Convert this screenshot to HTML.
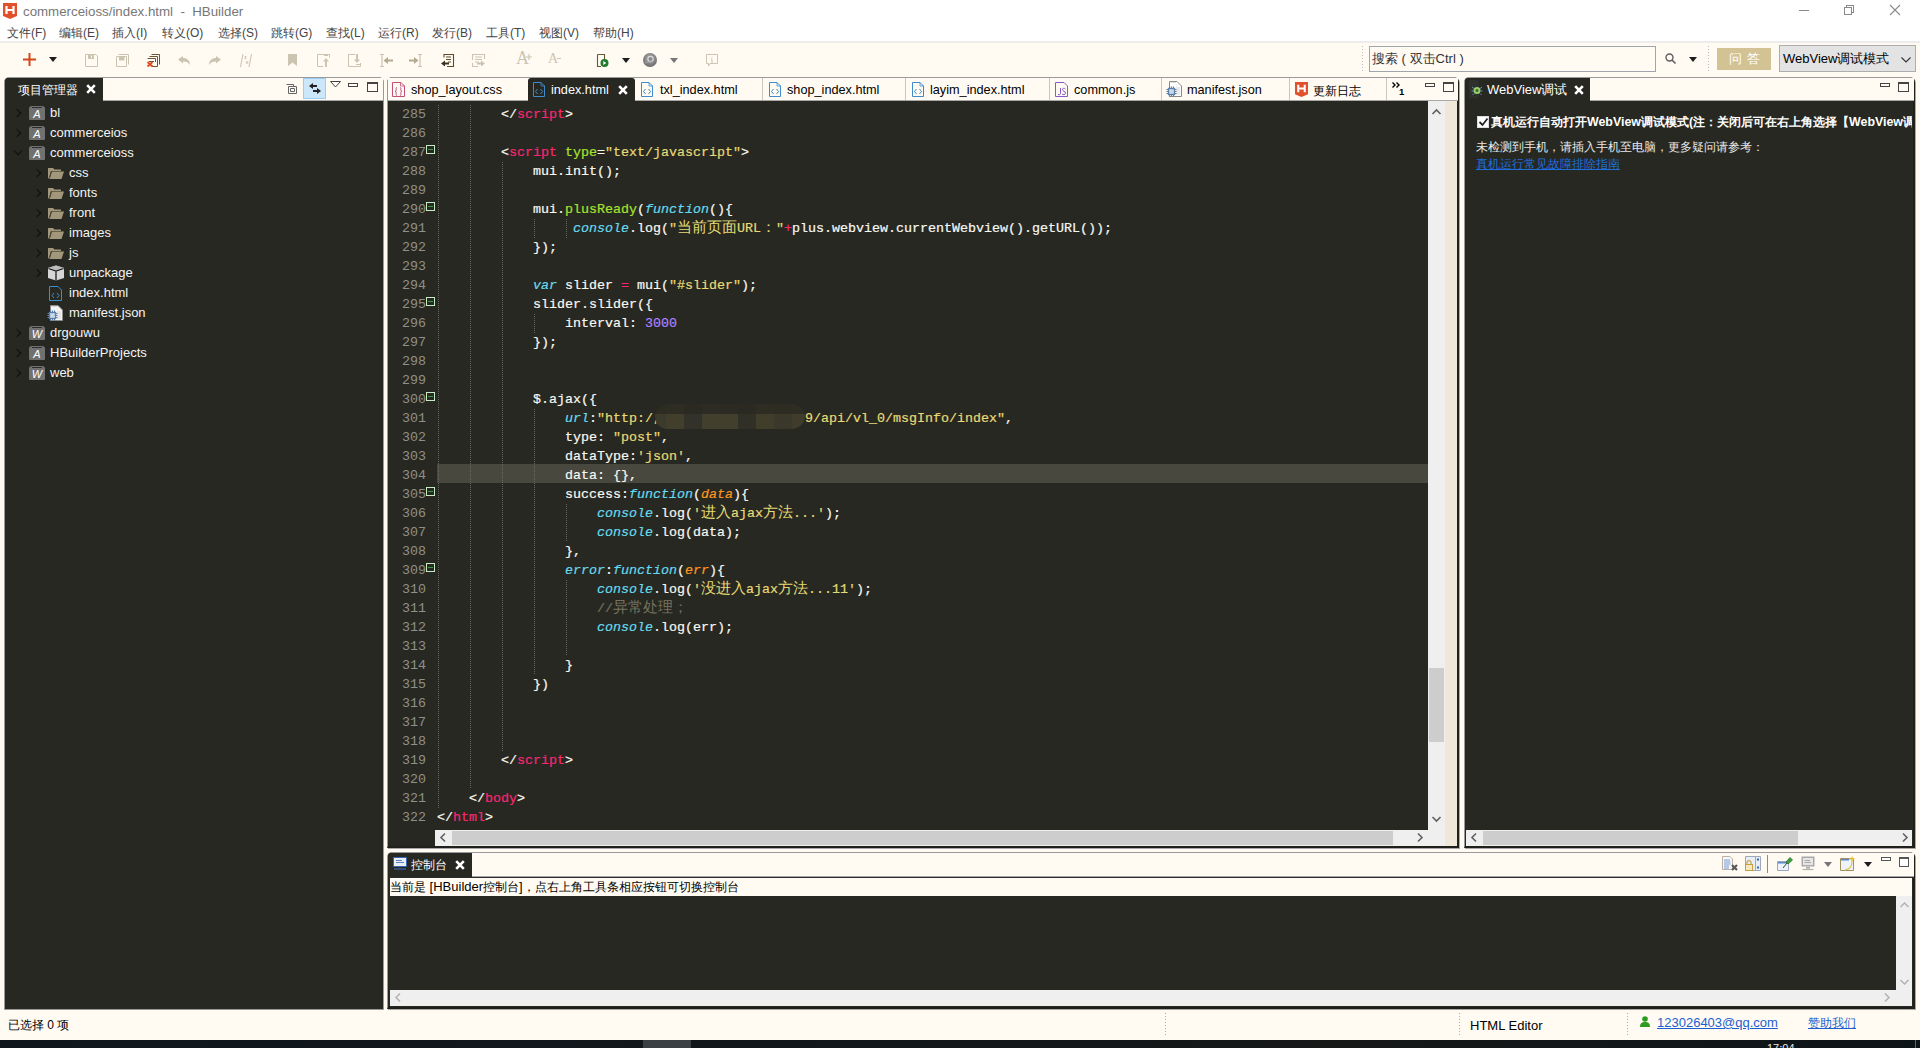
<!DOCTYPE html>
<html><head><meta charset="utf-8">
<style>
*{margin:0;padding:0;box-sizing:border-box}
html,body{width:1920px;height:1048px;overflow:hidden;background:#fffbf3;font-family:"Liberation Sans",sans-serif;font-size:13px;color:#000}
.a{position:absolute}
svg{position:absolute;overflow:visible}
#title{left:0;top:0;width:1920px;height:41px;background:#fff}
#ttext{left:23px;top:4px;font-size:13.3px;color:#777;white-space:pre}
.menu{position:absolute;top:25px;font-size:12px;color:#444;white-space:nowrap}
.panel{position:absolute;background:#272822}
.tabhdr{position:absolute;background:#fffbf3}
.dtab{position:absolute;background:#272822;border-radius:3px 3px 0 0}
.tt{position:absolute;font-size:12.7px;color:#000;white-space:nowrap;top:83px}
.sep{position:absolute;top:78px;width:1px;height:22px;background:#c9c6bf}
.guide{position:absolute;width:1px;background:repeating-linear-gradient(to bottom,#67675f 0 1px,transparent 1px 2px)}
.ln{position:absolute;left:395px;width:31px;text-align:right;height:19px;line-height:19px;font-family:"Liberation Mono",monospace;font-size:13.33px;color:#8f908a}
.fold{position:absolute;left:426px;width:9px;height:9px;border:1px solid #c6eac6;background:#272822}
.fold:after{content:"";position:absolute;left:1px;top:3px;width:5px;height:1px;background:#3c9a3c}
.cl{position:absolute;height:19px;line-height:19px;font-family:"Liberation Mono",monospace;font-size:13.33px;white-space:pre;color:#f8f8f2;-webkit-text-stroke:0.2px currentColor}
.cl .w{color:#f8f8f2}.cl .p{color:#f92672}.cl .g{color:#a6e22e}.cl .y{color:#e6db74}.cl .c{color:#66d9ef;font-style:italic}
.cl .o{color:#fd971f;font-style:italic}.cl .v{color:#ae81ff}.cl .m{color:#75715e}
.cl .cj{font-size:15px;font-style:normal;-webkit-text-stroke:0}
.tr{position:absolute;color:#f4f4f4;font-size:13px;white-space:nowrap}
.chev{position:absolute;width:6px;height:6px;border-right:1.5px solid #101010;border-top:1.5px solid #101010;transform:rotate(45deg)}
.pico{position:absolute;width:16px;height:14px;background:#717171;border-radius:3px 3px 1px 1px;color:#fff;font-size:11px;font-style:italic;text-align:center;line-height:17px}
.pico:before{content:"";position:absolute;left:3px;top:1px;width:10px;height:1px;background:#2e2e2e}
.fold2{position:absolute;width:16px;height:12px}
.sb{position:absolute;background:#efefef}
.thumb{position:absolute;background:#cdcdcd}
</style></head><body>
<!-- ============ title bar ============ -->
<div class="a" id="title"></div>
<svg style="left:3px;top:3px" width="14" height="16" viewBox="0 0 14 16"><path d="M0 0H14V13L7 16L0 13Z" fill="#e2502b"/><path d="M3.5 3V11M10.5 3V11M3.5 7H10.5" stroke="#fff" stroke-width="2.2"/></svg>
<div class="a" id="ttext">commerceioss/index.html  -  HBuilder</div>
<div class="a" style="left:1799px;top:10px;width:10px;height:1px;background:#8a8a8a"></div>
<div class="a" style="left:1846px;top:5px;width:8px;height:8px;border:1px solid #8a8a8a"></div>
<div class="a" style="left:1844px;top:7px;width:8px;height:8px;border:1px solid #8a8a8a;background:#fff"></div>
<svg style="left:1890px;top:5px" width="10" height="10"><path d="M0 0L10 10M10 0L0 10" stroke="#8a8a8a" stroke-width="1.1"/></svg>
<div class="menu" style="left:7px">文件(F)</div>
<div class="menu" style="left:59px">编辑(E)</div>
<div class="menu" style="left:112px">插入(I)</div>
<div class="menu" style="left:162px">转义(O)</div>
<div class="menu" style="left:218px">选择(S)</div>
<div class="menu" style="left:271px">跳转(G)</div>
<div class="menu" style="left:326px">查找(L)</div>
<div class="menu" style="left:378px">运行(R)</div>
<div class="menu" style="left:432px">发行(B)</div>
<div class="menu" style="left:486px">工具(T)</div>
<div class="menu" style="left:539px">视图(V)</div>
<div class="menu" style="left:593px">帮助(H)</div>
<div class="a" style="left:0;top:41px;width:1920px;height:2px;background:#ededed"></div>

<!-- toolbar icons -->
<svg style="left:23px;top:53px" width="13" height="13"><path d="M6.5 0V13M0 6.5H13" stroke="#d5461b" stroke-width="2"/></svg>
<svg style="left:49px;top:57px" width="8" height="5"><path d="M0 0H8L4 5Z" fill="#1d1d1d"/></svg>
<svg style="left:85px;top:54px" width="13" height="13"><path d="M0.5 0.5H11L12.5 2V12.5H0.5Z" fill="none" stroke="#cbc4b1"/><path d="M3 0.5H9V5H3Z" fill="#cbc4b1"/><path d="M6.5 1.5V4" stroke="#fffbf3"/></svg>
<svg style="left:116px;top:54px" width="13" height="13"><path d="M2.5 0.5H12.5V10.5" fill="none" stroke="#cbc4b1"/><path d="M0.5 2.5H10.5V12.5H0.5Z" fill="none" stroke="#cbc4b1"/><path d="M3 2.5H8.5V6.5H3Z" fill="#cbc4b1"/></svg>
<svg style="left:147px;top:54px" width="13" height="13"><path d="M4.5 0.5H12.5V10.5M2.5 2.5H10.5V12.5H5M0.5 4.5H8.5V8" fill="none" stroke="#6b5733"/><path d="M2 7.5H7" stroke="#6b5733"/><path d="M0.5 8L5.5 12.5M5.5 8L0.5 12.5" stroke="#e0491c" stroke-width="1.8"/></svg>
<svg style="left:178px;top:56px" width="12" height="9"><path d="M0 3.5L5 0V2C9 2 12 4.5 12 9C10.5 6.5 8.5 5.5 5 5.5V7.5Z" fill="#cbc4b1"/></svg>
<svg style="left:209px;top:56px" width="12" height="9"><path d="M12 3.5L7 0V2C3 2 0 4.5 0 9C1.5 6.5 3.5 5.5 7 5.5V7.5Z" fill="#cbc4b1"/></svg>
<svg style="left:240px;top:54px" width="12" height="13"><path d="M3 0L0.5 13M11.5 0L9 13" stroke="#cbc4b1" stroke-width="1.1"/><path d="M4.5 2.5L6.5 4.5M6.5 2.5L4.5 4.5M5.5 2V5M6 7.5L8 9.5M8 7.5L6 9.5M7 7V10" stroke="#cbc4b1" stroke-width="0.9"/></svg>
<svg style="left:288px;top:54px" width="9" height="12"><path d="M0 0H9V12L4.5 8.5L0 12Z" fill="#cbc4b1"/></svg>
<svg style="left:317px;top:54px" width="13" height="13"><path d="M12.5 3.5V0.5H0.5V12.5H6" fill="none" stroke="#cbc4b1"/><path d="M7 1.5H11" stroke="#cbc4b1"/><path d="M9 4L6 7.5H8V13H10V7.5H12Z" fill="#cbc4b1"/></svg>
<svg style="left:348px;top:54px" width="13" height="13"><path d="M7 0.5H0.5V12.5H12.5V9" fill="none" stroke="#cbc4b1"/><path d="M8 10.5H12" stroke="#cbc4b1"/><path d="M9 9L6 5.5H8V0H10V5.5H12Z" fill="#cbc4b1"/></svg>
<svg style="left:380px;top:54px" width="13" height="13"><path d="M0 0.5H4M0 12.5H4M2 0.5V12.5" stroke="#cbc4b1" stroke-width="1.2"/><path d="M3.5 6.5L8 3V5.5H13V7.5H8V10Z" fill="#b3aa8f"/></svg>
<svg style="left:409px;top:54px" width="13" height="13"><path d="M9 0.5H13M9 12.5H13M11 0.5V12.5" stroke="#cbc4b1" stroke-width="1.2"/><path d="M9.5 6.5L5 3V5.5H0V7.5H5V10Z" fill="#b3aa8f"/></svg>
<svg style="left:441px;top:54px" width="13" height="13"><path d="M3 3.5V0.5H12.5V12.5H6" fill="none" stroke="#5d4a28" stroke-width="1.1"/><path d="M5 3H10M5 5.5H10M7 8H10" stroke="#5d4a28"/><path d="M0 9.5L4 6.5V8.5H8V10.5H4V12.5Z" fill="#3d3020"/></svg>
<svg style="left:472px;top:54px" width="13" height="13"><path d="M0.5 6V0.5H12.5V5M0.5 9V12.5H6" fill="none" stroke="#cbc4b1" stroke-width="1.1"/><path d="M3 3H10M3 5.5H10M3 8H7" stroke="#cbc4b1"/><path d="M13 9.5L9 6.5V8.5H5V10.5H9V12.5Z" fill="#cbc4b1"/></svg>
<div class="a" style="left:516px;top:49px;font-family:'Liberation Serif',serif;font-size:18px;color:#cbc4b1;line-height:18px">A</div>
<svg style="left:526px;top:54px" width="6" height="6"><path d="M3 0V6M0 3H6" stroke="#cbc4b1" stroke-width="1.1"/></svg>
<div class="a" style="left:548px;top:52px;font-family:'Liberation Serif',serif;font-size:14px;color:#cbc4b1;line-height:14px">A</div>
<svg style="left:557px;top:58px" width="4" height="2"><path d="M0 0.5H4" stroke="#cbc4b1" stroke-width="1"/></svg>
<svg style="left:597px;top:54px" width="12" height="13"><path d="M0.5 0.5H7.5V6M4 12.5H0.5V0.5" fill="none" stroke="#6b5733" stroke-width="1.1"/><circle cx="7.5" cy="9" r="4" fill="#1f7a2c"/><path d="M6.3 7V11L9.3 9Z" fill="#fff"/></svg>
<svg style="left:622px;top:58px" width="8" height="5"><path d="M0 0H8L4 5Z" fill="#1d1d1d"/></svg>
<svg style="left:643px;top:53px" width="14" height="14"><defs><radialGradient id="cg" cx="50%" cy="40%" r="60%"><stop offset="0" stop-color="#b8b8b8"/><stop offset="1" stop-color="#686868"/></radialGradient></defs><circle cx="7" cy="7" r="7" fill="url(#cg)"/><circle cx="7.5" cy="6" r="2.6" fill="#8a8a8a" stroke="#dcdcdc" stroke-width="1.1"/><path d="M2 10C4 9 6 8.5 10 8.5" stroke="#aaa" stroke-width="0.8" fill="none"/></svg>
<svg style="left:670px;top:58px" width="8" height="5"><path d="M0 0H8L4 5Z" fill="#76767a"/></svg>
<svg style="left:706px;top:54px" width="12" height="13"><path d="M0.5 0.5H11.5V9.5H4L2.5 12V9.5H0.5Z" fill="none" stroke="#cbc4b1"/><path d="M6 2.5V3.5M6 5V8M5 8H7M5 5H6" stroke="#cbc4b1" stroke-width="0.9"/></svg>
<!-- search -->
<div class="a" style="left:1362px;top:46px;width:1px;height:26px;background:repeating-linear-gradient(to bottom,#bdbdbd 0 1px,transparent 1px 3px)"></div>
<div class="a" style="left:1369px;top:46px;width:287px;height:26px;border:1px solid #9fa4ad;background:#fffbf3"></div>
<div class="a" style="left:1372px;top:50px;font-size:13px;color:#333;white-space:pre">搜索 ( 双击Ctrl )</div>
<svg style="left:1665px;top:53px" width="11" height="11"><circle cx="4.5" cy="4.5" r="3.5" fill="none" stroke="#5e5e5e" stroke-width="1.4"/><path d="M7 7L10.5 10.5" stroke="#5e5e5e" stroke-width="1.6"/></svg>
<svg style="left:1689px;top:57px" width="8" height="5"><path d="M0 0H8L4 5Z" fill="#1d1d1d"/></svg>
<div class="a" style="left:1708px;top:46px;width:1px;height:26px;background:repeating-linear-gradient(to bottom,#bdbdbd 0 1px,transparent 1px 3px)"></div>
<div class="a" style="left:1717px;top:48px;width:54px;height:22px;background:#d3c294;color:#fff;font-size:13px;line-height:22px;text-align:center;letter-spacing:5px;padding-left:5px">问答</div>
<div class="a" style="left:1779px;top:45px;width:137px;height:27px;border:1px solid #adadad;background:#e3e3e3"></div>
<div class="a" style="left:1783px;top:50px;font-size:13px;color:#000;white-space:nowrap">WebView调试模式</div>
<svg style="left:1901px;top:57px" width="10" height="6"><path d="M0.5 0.5L5 5L9.5 0.5" fill="none" stroke="#333" stroke-width="1.1"/></svg>


<!-- ============ left panel ============ -->
<div class="a" style="left:4px;top:77px;width:380px;height:933px;border:1px solid #9a9a9a;border-radius:5px 5px 0 0;background:#272822"></div>
<div class="tabhdr" style="left:103px;top:78px;width:280px;height:22px"></div>
<div class="a" style="left:103px;top:100px;width:280px;height:1px;background:#a8a8a8"></div>
<div class="dtab" style="left:5px;top:78px;width:98px;height:23px"></div>
<div class="a" style="left:18px;top:82px;color:#fff;font-size:12px">项目管理器</div>
<svg style="left:86px;top:84px" width="10" height="10"><path d="M1.2 1.2L8.8 8.8M8.8 1.2L1.2 8.8" stroke="#fff" stroke-width="2.6"/></svg>
<svg style="left:286px;top:84px" width="11" height="10"><path d="M0.5 0.5H7.5V2.5M2.5 2.5H10.5V9.5H2.5Z" fill="none" stroke="#666" stroke-width="1"/><path d="M4.5 4.5H8.5V7.5H4.5Z" fill="none" stroke="#666"/></svg>
<div class="a" style="left:303px;top:78px;width:23px;height:21px;background:#cce6fa;border:1px solid #99cdf5"></div>
<svg style="left:309px;top:83px" width="12" height="11"><path d="M0 3L4 0V2H8V4H4V6Z" fill="#222"/><path d="M12 8L8 5V7H4V9H8V11Z" fill="#222"/></svg>
<svg style="left:330px;top:81px" width="11" height="7"><path d="M0.5 0.5H10.5L5.5 6Z" fill="none" stroke="#444" stroke-width="1"/></svg>
<div class="a" style="left:348px;top:83px;width:10px;height:4px;border:1px solid #444"></div>
<div class="a" style="left:367px;top:82px;width:11px;height:10px;border:1px solid #444;border-top:2px solid #444"></div>

<div class="chev" style="left:14px;top:110px"></div>
<div class="pico" style="left:29px;top:106px">A</div>
<div class="tr" style="left:50px;top:105px">bl</div>
<div class="chev" style="left:14px;top:130px"></div>
<div class="pico" style="left:29px;top:126px">A</div>
<div class="tr" style="left:50px;top:125px">commerceios</div>
<div class="chev" style="left:15px;top:148px;transform:rotate(135deg)"></div>
<div class="pico" style="left:29px;top:146px">A</div>
<div class="tr" style="left:50px;top:145px">commerceioss</div>
<div class="chev" style="left:34px;top:170px"></div>
<svg style="left:48px;top:167px" width="16" height="12"><path d="M0 1H5L6.5 2.5H13V4H3L1 11H0Z" fill="#a3977b"/><path d="M3.5 4.5H16L13.5 12H0.5Z" fill="#a3977b"/><path d="M1.5 11.5L3.5 4.5" stroke="#272822" stroke-width="0.8"/></svg>
<div class="tr" style="left:69px;top:165px">css</div>
<div class="chev" style="left:34px;top:190px"></div>
<svg style="left:48px;top:187px" width="16" height="12"><path d="M0 1H5L6.5 2.5H13V4H3L1 11H0Z" fill="#a3977b"/><path d="M3.5 4.5H16L13.5 12H0.5Z" fill="#a3977b"/><path d="M1.5 11.5L3.5 4.5" stroke="#272822" stroke-width="0.8"/></svg>
<div class="tr" style="left:69px;top:185px">fonts</div>
<div class="chev" style="left:34px;top:210px"></div>
<svg style="left:48px;top:207px" width="16" height="12"><path d="M0 1H5L6.5 2.5H13V4H3L1 11H0Z" fill="#a3977b"/><path d="M3.5 4.5H16L13.5 12H0.5Z" fill="#a3977b"/><path d="M1.5 11.5L3.5 4.5" stroke="#272822" stroke-width="0.8"/></svg>
<div class="tr" style="left:69px;top:205px">front</div>
<div class="chev" style="left:34px;top:230px"></div>
<svg style="left:48px;top:227px" width="16" height="12"><path d="M0 1H5L6.5 2.5H13V4H3L1 11H0Z" fill="#a3977b"/><path d="M3.5 4.5H16L13.5 12H0.5Z" fill="#a3977b"/><path d="M1.5 11.5L3.5 4.5" stroke="#272822" stroke-width="0.8"/></svg>
<div class="tr" style="left:69px;top:225px">images</div>
<div class="chev" style="left:34px;top:250px"></div>
<svg style="left:48px;top:247px" width="16" height="12"><path d="M0 1H5L6.5 2.5H13V4H3L1 11H0Z" fill="#a3977b"/><path d="M3.5 4.5H16L13.5 12H0.5Z" fill="#a3977b"/><path d="M1.5 11.5L3.5 4.5" stroke="#272822" stroke-width="0.8"/></svg>
<div class="tr" style="left:69px;top:245px">js</div>
<div class="chev" style="left:34px;top:270px"></div>
<svg style="left:48px;top:265px" width="16" height="16"><path d="M8 0.5L16 3V13L8 15.5L0 13V3Z" fill="#d6d6d6"/><path d="M8 0.5L16 3L8 5.5L0 3Z" fill="#bcbcbc"/><path d="M0.5 3.5L8 6L15.5 3.5M8 6V15.5" stroke="#1c1c1c" stroke-width="1.3" fill="none"/></svg><div class="tr" style="left:69px;top:265px">unpackage</div>
<svg style="left:49px;top:286px" width="13" height="15"><path d="M0.5 0.5H9L12.5 4V14.5H0.5Z" fill="#272822" stroke="#3a8fd0" stroke-width="1"/><path d="M5 7L3 9.5L5 12M8 7L10 9.5L8 12" fill="none" stroke="#3a8fd0" stroke-width="1"/></svg>
<div class="tr" style="left:69px;top:285px">index.html</div>
<svg style="left:47px;top:305px" width="16" height="16"><path d="M3.5 0.5H11L15.5 5V15.5H3.5Z" fill="#f4f4f4" stroke="#8a8a8a" stroke-width="1"/><path d="M5 1.5L6 0.5L7 1.5L8 0.5L9 1.5L10 0.5" stroke="#9a9a9a" stroke-width="0.8" fill="none"/><path d="M10 7H14M10 9H14M10 11H14M9 13H14" stroke="#d0d0d0" stroke-width="0.9"/><rect x="2.5" y="7.5" width="6" height="6" fill="#c8d8e8" stroke="#5a7fa8" stroke-width="1.3"/><path d="M3.5 5.5V7M5.5 5.5V7M7.5 5.5V7M3.5 14V15.5M5.5 14V15.5M7.5 14V15.5M0.5 8.5H2M0.5 10.5H2M0.5 12.5H2M9 8.5H10.5M9 10.5H10.5M9 12.5H10.5" stroke="#5a7fa8" stroke-width="1.1"/></svg>
<div class="tr" style="left:69px;top:305px">manifest.json</div>

<div class="chev" style="left:14px;top:330px"></div>
<div class="pico" style="left:29px;top:326px">W</div>
<div class="tr" style="left:50px;top:325px">drgouwu</div>
<div class="chev" style="left:14px;top:350px"></div>
<div class="pico" style="left:29px;top:346px">A</div>
<div class="tr" style="left:50px;top:345px">HBuilderProjects</div>
<div class="chev" style="left:14px;top:370px"></div>
<div class="pico" style="left:29px;top:366px">W</div>
<div class="tr" style="left:50px;top:365px">web</div>


<!-- ============ editor panel ============ -->
<div class="a" style="left:387px;top:77px;width:1072px;height:771px;border:1px solid #9a9a9a;border-right:2px solid #1f1f1c;border-bottom:2px solid #1f1f1c;border-radius:5px 5px 0 0;background:#272822;box-shadow:1px 1px 0 #a8a8a8"></div>
<div class="tabhdr" style="left:388px;top:78px;width:1070px;height:22px"></div>
<div class="a" style="left:388px;top:100px;width:1070px;height:1px;background:#a8a8a8"></div>
<svg style="left:392px;top:82px" width="13" height="15"><path d="M0.5 0.5H9L12.5 4V14.5H0.5Z" fill="#fffbf3" stroke="#c0507a" stroke-width="1"/><path d="M8.5 0.5V4H12.5" fill="none" stroke="#c0507a" stroke-width="0.8"/><path d="M5 5.5C3.8 5.5 4.2 7 4.2 8.2C4.2 9 3.8 9.5 3 9.5C3.8 9.5 4.2 10 4.2 10.8C4.2 12 3.8 13.5 5 13.5M8 5.5C9.2 5.5 8.8 7 8.8 8.2C8.8 9 9.2 9.5 10 9.5C9.2 9.5 8.8 10 8.8 10.8C8.8 12 9.2 13.5 8 13.5" fill="none" stroke="#c0507a" stroke-width="1"/></svg><div class="tt" style="left:411px">shop_layout.css</div>
<div class="dtab" style="left:528px;top:78px;width:107px;height:23px"></div>
<svg style="left:533px;top:82px" width="12" height="15"><path d="M0.5 0.5H8L11.5 4V14.5H0.5Z" fill="#272822" stroke="#3f8ccc" stroke-width="1"/><path d="M8 0.5V4H11.5" fill="none" stroke="#3f8ccc" stroke-width="0.8"/><path d="M4.5 7L2.5 9.5L4.5 12M7.5 7L9.5 9.5L7.5 12" fill="none" stroke="#3f8ccc" stroke-width="1"/></svg>
<div class="tt" style="left:551px;color:#fff">index.html</div>
<svg style="left:618px;top:85px" width="10" height="10"><path d="M1.2 1.2L8.8 8.8M8.8 1.2L1.2 8.8" stroke="#fff" stroke-width="2.6"/></svg>
<svg style="left:641px;top:82px" width="12" height="15"><path d="M0.5 0.5H8L11.5 4V14.5H0.5Z" fill="#fffbf3" stroke="#3f8ccc" stroke-width="1"/><path d="M8 0.5V4H11.5" fill="none" stroke="#3f8ccc" stroke-width="0.8"/><path d="M4.5 7L2.5 9.5L4.5 12M7.5 7L9.5 9.5L7.5 12" fill="none" stroke="#3f8ccc" stroke-width="1"/></svg>
<div class="tt" style="left:660px">txl_index.html</div>
<div class="sep" style="left:762px"></div>
<svg style="left:769px;top:82px" width="12" height="15"><path d="M0.5 0.5H8L11.5 4V14.5H0.5Z" fill="#fffbf3" stroke="#3f8ccc" stroke-width="1"/><path d="M8 0.5V4H11.5" fill="none" stroke="#3f8ccc" stroke-width="0.8"/><path d="M4.5 7L2.5 9.5L4.5 12M7.5 7L9.5 9.5L7.5 12" fill="none" stroke="#3f8ccc" stroke-width="1"/></svg>
<div class="tt" style="left:787px">shop_index.html</div>
<div class="sep" style="left:905px"></div>
<svg style="left:912px;top:82px" width="12" height="15"><path d="M0.5 0.5H8L11.5 4V14.5H0.5Z" fill="#fffbf3" stroke="#3f8ccc" stroke-width="1"/><path d="M8 0.5V4H11.5" fill="none" stroke="#3f8ccc" stroke-width="0.8"/><path d="M4.5 7L2.5 9.5L4.5 12M7.5 7L9.5 9.5L7.5 12" fill="none" stroke="#3f8ccc" stroke-width="1"/></svg>
<div class="tt" style="left:930px">layim_index.html</div>
<div class="sep" style="left:1049px"></div>
<svg style="left:1055px;top:82px" width="13" height="15"><path d="M0.5 0.5H9L12.5 4V14.5H0.5Z" fill="#fffbf3" stroke="#8a5ac8" stroke-width="1"/><path d="M5.5 6V11.5C5.5 12.5 4.5 13 3 12.5M10.5 7C9.5 6 7.5 6 7.5 7.5C7.5 9.5 10.5 9 10.5 11C10.5 13 8 13 7 12" fill="none" stroke="#8a5ac8" stroke-width="1"/></svg>
<div class="tt" style="left:1074px">common.js</div>
<div class="sep" style="left:1161px"></div>
<svg style="left:1166px;top:81px" width="16" height="16"><path d="M3.5 0.5H11L15.5 5V15.5H3.5Z" fill="#fff" stroke="#8a8a8a" stroke-width="1"/><path d="M5 1.5L6 0.5L7 1.5L8 0.5L9 1.5L10 0.5" stroke="#9a9a9a" stroke-width="0.8" fill="none"/><path d="M10 7H14M10 9H14M10 11H14M9 13H14" stroke="#d0d0d0" stroke-width="0.9"/><rect x="2.5" y="7.5" width="6" height="6" fill="#c8d8e8" stroke="#5a7fa8" stroke-width="1.3"/><path d="M3.5 5.5V7M5.5 5.5V7M7.5 5.5V7M3.5 14V15.5M5.5 14V15.5M7.5 14V15.5M0.5 8.5H2M0.5 10.5H2M0.5 12.5H2M9 8.5H10.5M9 10.5H10.5M9 12.5H10.5" stroke="#5a7fa8" stroke-width="1.1"/></svg>
<div class="tt" style="left:1187px">manifest.json</div>
<div class="sep" style="left:1289px"></div>
<svg style="left:1295px;top:82px" width="13" height="15" viewBox="0 0 14 16"><path d="M0 0H14V13L7 16L0 13Z" fill="#e2502b"/><path d="M3.5 3V11M10.5 3V11M3.5 7H10.5" stroke="#fff" stroke-width="2.2"/></svg>
<div class="tt" style="left:1313px;font-size:12px">更新日志</div>
<div class="sep" style="left:1386px"></div>
<svg style="left:1392px;top:82px" width="9" height="6"><path d="M0.5 0.5L3 3L0.5 5.5M4.5 0.5L7 3L4.5 5.5" fill="none" stroke="#000" stroke-width="1.4"/></svg>
<div class="a" style="left:1399px;top:86px;font-size:9.5px;color:#000;font-weight:bold">1</div>
<div class="a" style="left:1425px;top:83px;width:10px;height:4px;border:1px solid #444"></div>
<div class="a" style="left:1443px;top:82px;width:11px;height:10px;border:1px solid #444;border-top:2px solid #444"></div>

<div class="a" style="left:437px;top:464px;width:991px;height:19px;background:#49483e"></div>
<div class="guide" style="left:438px;top:105px;height:703px"></div>
<div class="guide" style="left:470px;top:105px;height:684px"></div>
<div class="guide" style="left:502px;top:162px;height:589px"></div>
<div class="guide" style="left:534px;top:219px;height:19px"></div>
<div class="guide" style="left:566px;top:219px;height:19px"></div>
<div class="guide" style="left:534px;top:314px;height:19px"></div>
<div class="guide" style="left:534px;top:409px;height:266px"></div>
<div class="guide" style="left:566px;top:504px;height:38px"></div>
<div class="guide" style="left:566px;top:580px;height:76px"></div>
<div class="ln" style="top:105px">285</div>
<div class="cl" style="top:105px;left:501px"><span class="w">&lt;/</span><span class="p">script</span><span class="w">&gt;</span></div>
<div class="ln" style="top:124px">286</div>
<div class="ln" style="top:143px">287</div>
<div class="fold" style="top:145px"></div>
<div class="cl" style="top:143px;left:501px"><span class="w">&lt;</span><span class="p">script</span><span class="w"> </span><span class="g">type</span><span class="w">=</span><span class="y">"text/javascript"</span><span class="w">&gt;</span></div>
<div class="ln" style="top:162px">288</div>
<div class="cl" style="top:162px;left:533px"><span class="w">mui.init();</span></div>
<div class="ln" style="top:181px">289</div>
<div class="ln" style="top:200px">290</div>
<div class="fold" style="top:202px"></div>
<div class="cl" style="top:200px;left:533px"><span class="w">mui.</span><span class="g">plusReady</span><span class="w">(</span><span class="c">function</span><span class="w">(){</span></div>
<div class="ln" style="top:219px">291</div>
<div class="cl" style="top:219px;left:573px"><span class="c">console</span><span class="w">.log(</span><span class="y">"</span><span class="y cj">当前页面</span><span class="y">URL</span><span class="y cj">：</span><span class="y">"</span><span class="p">+</span><span class="w">plus.webview.currentWebview().getURL());</span></div>
<div class="ln" style="top:238px">292</div>
<div class="cl" style="top:238px;left:533px"><span class="w">});</span></div>
<div class="ln" style="top:257px">293</div>
<div class="ln" style="top:276px">294</div>
<div class="cl" style="top:276px;left:533px"><span class="c">var</span><span class="w"> slider </span><span class="p">=</span><span class="w"> mui(</span><span class="y">"#slider"</span><span class="w">);</span></div>
<div class="ln" style="top:295px">295</div>
<div class="fold" style="top:297px"></div>
<div class="cl" style="top:295px;left:533px"><span class="w">slider.slider({</span></div>
<div class="ln" style="top:314px">296</div>
<div class="cl" style="top:314px;left:565px"><span class="w">interval: </span><span class="v">3000</span></div>
<div class="ln" style="top:333px">297</div>
<div class="cl" style="top:333px;left:533px"><span class="w">});</span></div>
<div class="ln" style="top:352px">298</div>
<div class="ln" style="top:371px">299</div>
<div class="ln" style="top:390px">300</div>
<div class="fold" style="top:392px"></div>
<div class="cl" style="top:390px;left:533px"><span class="w">$.ajax({</span></div>
<div class="ln" style="top:409px">301</div>
<div class="cl" style="top:409px;left:565px"><span class="c">url</span><span class="w">:</span><span class="y">"http:/,</span><span class="y">                  </span><span class="y">9/api/vl_0/msgInfo/index"</span><span class="w">,</span></div>
<div class="ln" style="top:428px">302</div>
<div class="cl" style="top:428px;left:565px"><span class="w">type: </span><span class="y">"post"</span><span class="w">,</span></div>
<div class="ln" style="top:447px">303</div>
<div class="cl" style="top:447px;left:565px"><span class="w">dataType:</span><span class="y">'json'</span><span class="w">,</span></div>
<div class="ln" style="top:466px">304</div>
<div class="cl" style="top:466px;left:565px"><span class="w">data</span><span class="w">: {},</span></div>
<div class="ln" style="top:485px">305</div>
<div class="fold" style="top:487px"></div>
<div class="cl" style="top:485px;left:565px"><span class="w">success:</span><span class="c">function</span><span class="w">(</span><span class="o">data</span><span class="w">){</span></div>
<div class="ln" style="top:504px">306</div>
<div class="cl" style="top:504px;left:597px"><span class="c">console</span><span class="w">.log(</span><span class="y">'</span><span class="y cj">进入</span><span class="y">ajax</span><span class="y cj">方法</span><span class="y">...'</span><span class="w">);</span></div>
<div class="ln" style="top:523px">307</div>
<div class="cl" style="top:523px;left:597px"><span class="c">console</span><span class="w">.log(data);</span></div>
<div class="ln" style="top:542px">308</div>
<div class="cl" style="top:542px;left:565px"><span class="w">},</span></div>
<div class="ln" style="top:561px">309</div>
<div class="fold" style="top:563px"></div>
<div class="cl" style="top:561px;left:565px"><span class="c">error</span><span class="w">:</span><span class="c">function</span><span class="w">(</span><span class="o">err</span><span class="w">){</span></div>
<div class="ln" style="top:580px">310</div>
<div class="cl" style="top:580px;left:597px"><span class="c">console</span><span class="w">.log(</span><span class="y">'</span><span class="y cj">没进入</span><span class="y">ajax</span><span class="y cj">方法</span><span class="y">...11'</span><span class="w">);</span></div>
<div class="ln" style="top:599px">311</div>
<div class="cl" style="top:599px;left:597px"><span class="m">//</span><span class="m cj">异常处理；</span></div>
<div class="ln" style="top:618px">312</div>
<div class="cl" style="top:618px;left:597px"><span class="c">console</span><span class="w">.log(err);</span></div>
<div class="ln" style="top:637px">313</div>
<div class="ln" style="top:656px">314</div>
<div class="cl" style="top:656px;left:565px"><span class="w">}</span></div>
<div class="ln" style="top:675px">315</div>
<div class="cl" style="top:675px;left:533px"><span class="w">})</span></div>
<div class="ln" style="top:694px">316</div>
<div class="ln" style="top:713px">317</div>
<div class="ln" style="top:732px">318</div>
<div class="ln" style="top:751px">319</div>
<div class="cl" style="top:751px;left:501px"><span class="w">&lt;/</span><span class="p">script</span><span class="w">&gt;</span></div>
<div class="ln" style="top:770px">320</div>
<div class="ln" style="top:789px">321</div>
<div class="cl" style="top:789px;left:469px"><span class="w">&lt;/</span><span class="p">body</span><span class="w">&gt;</span></div>
<div class="ln" style="top:808px">322</div>
<div class="cl" style="top:808px;left:437px"><span class="w">&lt;/</span><span class="p">html</span><span class="w">&gt;</span></div>
<div class="a" style="left:655px;top:404px;width:150px;height:25px;border-radius:16px 14px 14px 12px/12px 12px 13px 13px;overflow:hidden;background:#2c2b23"><div class="a" style="left:0px;top:0;width:11px;height:10px;background:#2d2c23"></div><div class="a" style="left:0px;top:10px;width:11px;height:15px;background:#3b3a2b"></div><div class="a" style="left:11px;top:0;width:18px;height:10px;background:#2e2d24"></div><div class="a" style="left:11px;top:10px;width:18px;height:15px;background:#423e2c"></div><div class="a" style="left:29px;top:0;width:18px;height:10px;background:#2a2a22"></div><div class="a" style="left:29px;top:10px;width:18px;height:15px;background:#33322a"></div><div class="a" style="left:47px;top:0;width:18px;height:10px;background:#2d2c24"></div><div class="a" style="left:47px;top:10px;width:18px;height:15px;background:#433f2d"></div><div class="a" style="left:65px;top:0;width:18px;height:10px;background:#2c2b23"></div><div class="a" style="left:65px;top:10px;width:18px;height:15px;background:#423f2c"></div><div class="a" style="left:83px;top:0;width:18px;height:10px;background:#2a2a22"></div><div class="a" style="left:83px;top:10px;width:18px;height:15px;background:#313027"></div><div class="a" style="left:101px;top:0;width:18px;height:10px;background:#2e2d24"></div><div class="a" style="left:101px;top:10px;width:18px;height:15px;background:#403d2b"></div><div class="a" style="left:119px;top:0;width:18px;height:10px;background:#2d2c23"></div><div class="a" style="left:119px;top:10px;width:18px;height:15px;background:#3a382a"></div><div class="a" style="left:137px;top:0;width:13px;height:10px;background:#2e2d24"></div><div class="a" style="left:137px;top:10px;width:13px;height:15px;background:#3f3c2b"></div></div>

<div class="sb" style="left:1428px;top:101px;width:17px;height:745px"></div>
<div class="a" style="left:1445px;top:101px;width:12px;height:745px;background:#efe7d7"></div>
<div class="thumb" style="left:1429px;top:668px;width:15px;height:74px"></div>
<svg style="left:1432px;top:109px" width="9" height="6"><path d="M0.5 5L4.5 1L8.5 5" fill="none" stroke="#606060" stroke-width="1.6"/></svg>
<svg style="left:1432px;top:816px" width="9" height="6"><path d="M0.5 1L4.5 5L8.5 1" fill="none" stroke="#606060" stroke-width="1.6"/></svg>
<div class="sb" style="left:435px;top:830px;width:993px;height:16px"></div>
<div class="thumb" style="left:452px;top:831px;width:941px;height:14px"></div>
<svg style="left:440px;top:833px" width="6" height="9"><path d="M5 0.5L1 4.5L5 8.5" fill="none" stroke="#606060" stroke-width="1.6"/></svg>
<svg style="left:1417px;top:833px" width="6" height="9"><path d="M1 0.5L5 4.5L1 8.5" fill="none" stroke="#606060" stroke-width="1.6"/></svg>


<!-- ============ webview panel ============ -->
<div class="a" style="left:1464px;top:77px;width:451px;height:771px;border:1px solid #9a9a9a;border-right:2px solid #1f1f1c;border-bottom:2px solid #1f1f1c;border-radius:5px 5px 0 0;background:#272822;box-shadow:1px 1px 0 #a8a8a8"></div>
<div class="tabhdr" style="left:1590px;top:78px;width:324px;height:22px"></div>
<div class="a" style="left:1590px;top:100px;width:324px;height:1px;background:#a8a8a8"></div>
<div class="dtab" style="left:1465px;top:78px;width:125px;height:23px"></div>
<div class="a" style="left:1469px;top:80px;width:10px;height:18px;background:#2f302b"></div>
<svg style="left:1471px;top:84px" width="12" height="12"><circle cx="6" cy="6.5" r="3.5" fill="#9acd6a"/><circle cx="6" cy="6.5" r="1.5" fill="#3a6a2a"/><path d="M1 3L3 4.5M11 3L9 4.5M0.5 7H2.5M11.5 7H9.5M1.5 11L3 9.5M10.5 11L9 9.5" stroke="#5a8fb0" stroke-width="1"/></svg>
<div class="a" style="left:1487px;top:81px;font-size:13px;color:#fff;white-space:nowrap">WebView调试</div>
<svg style="left:1574px;top:85px" width="10" height="10"><path d="M1.2 1.2L8.8 8.8M8.8 1.2L1.2 8.8" stroke="#fff" stroke-width="2.6"/></svg>
<div class="a" style="left:1880px;top:83px;width:10px;height:4px;border:1px solid #444"></div>
<div class="a" style="left:1898px;top:82px;width:11px;height:10px;border:1px solid #444;border-top:2px solid #444"></div>
<div class="a" style="left:1477px;top:116px;width:12px;height:12px;background:#fff;border:1px solid #ddd"></div>
<svg style="left:1479px;top:118px" width="9" height="8"><path d="M0.5 4L3.5 7L8.5 0.5" fill="none" stroke="#222" stroke-width="1.8"/></svg>
<div class="a" style="left:1491px;top:114px;width:421px;overflow:hidden;font-size:12.4px;font-weight:bold;color:#fff;white-space:nowrap">真机运行自动打开WebView调试模式(注：关闭后可在右上角选择【WebView调试模式】)</div>
<div class="a" style="left:1476px;top:139px;font-size:12px;color:#e8e8e8;white-space:nowrap">未检测到手机，请插入手机至电脑，更多疑问请参考：</div>
<div class="a" style="left:1476px;top:156px;font-size:12px;color:#1e6fd9;white-space:nowrap;text-decoration:underline">真机运行常见故障排除指南</div>
<div class="sb" style="left:1466px;top:830px;width:446px;height:16px"></div>
<div class="thumb" style="left:1483px;top:831px;width:315px;height:14px"></div>
<svg style="left:1471px;top:833px" width="6" height="9"><path d="M5 0.5L1 4.5L5 8.5" fill="none" stroke="#606060" stroke-width="1.6"/></svg>
<svg style="left:1902px;top:833px" width="6" height="9"><path d="M1 0.5L5 4.5L1 8.5" fill="none" stroke="#606060" stroke-width="1.6"/></svg>


<!-- ============ console panel ============ -->
<div class="a" style="left:387px;top:852px;width:1528px;height:157px;border:1px solid #9a9a9a;border-right:2px solid #1f1f1c;border-bottom:2px solid #1f1f1c;border-radius:5px 5px 0 0;background:#272822;box-shadow:1px 1px 0 #a8a8a8"></div>
<div class="tabhdr" style="left:472px;top:853px;width:1442px;height:23px"></div>
<div class="a" style="left:472px;top:876px;width:1442px;height:1px;background:#a8a8a8"></div>
<div class="dtab" style="left:388px;top:853px;width:84px;height:24px"></div>
<svg style="left:393px;top:857px" width="14" height="13"><path d="M0.5 0.5H13.5V9.5H0.5Z" fill="#e8eef8" stroke="#3a66b0" stroke-width="1"/><path d="M3 3.5H9M3 5.5H11" stroke="#3a66b0" stroke-width="0.8"/><path d="M1 12H13" stroke="#3a66b0" stroke-width="1.2"/></svg>
<div class="a" style="left:411px;top:857px;font-size:12px;color:#fff">控制台</div>
<svg style="left:455px;top:860px" width="10" height="10"><path d="M1.2 1.2L8.8 8.8M8.8 1.2L1.2 8.8" stroke="#fff" stroke-width="2.6"/></svg>
<svg style="left:1722px;top:856px" width="17" height="16"><path d="M0.5 0.5H8L10.5 3V13.5H0.5Z" fill="#f6f8fb" stroke="#b8b0a0"/><path d="M2 4H8M2 6H8.5M2 8H8.5M2 10H7M2 12H7" stroke="#6a8fc8" stroke-width="0.9"/><path d="M10 9L15 14M15 9L10 14" stroke="#5a5a5a" stroke-width="2.2"/></svg>
<svg style="left:1745px;top:856px" width="16" height="16"><path d="M0.5 0.5H15.5V14.5H0.5Z" fill="#e8eef6" stroke="#a0a8b8"/><path d="M10.5 0.5V14.5" stroke="#a0a8b8"/><rect x="12" y="2.5" width="2" height="2" fill="#3a66b0"/><rect x="12" y="10.5" width="2" height="2" fill="#3a66b0"/><rect x="0.5" y="8.5" width="7" height="6" fill="#f4e8c0" stroke="#c8a040"/><path d="M2 8.5V6.5C2 4 6 4 6 6.5V8.5" fill="none" stroke="#c8a040" stroke-width="1.2"/></svg>
<div class="a" style="left:1767px;top:855px;width:1px;height:18px;background:#8a8a8a"></div>
<svg style="left:1777px;top:856px" width="16" height="16"><path d="M0.5 5.5H11.5V14.5H0.5Z" fill="#eef3fa" stroke="#9aa8c0"/><path d="M1 6H11V7.5H1Z" fill="#5a88c8"/><path d="M6 12L10 7" stroke="#2a5a2a" stroke-width="1"/><path d="M9 6L13 1.5L15.5 4L11 8Z" fill="#3aa040" stroke="#2a7030" stroke-width="0.8"/></svg>
<svg style="left:1801px;top:856px" width="14" height="15"><path d="M0.5 0.5H13.5V10.5H0.5Z" fill="#a8a8a8"/><path d="M2 2H12V9H2Z" fill="#e6e6e6"/><path d="M3.5 4.5H9M3.5 6.5H10" stroke="#a8a8a8"/><path d="M5 11H9V12.5H5Z" fill="#a8a8a8"/><path d="M1.5 13.5H12.5" stroke="#b0b0b0" stroke-width="1.2"/></svg>
<svg style="left:1824px;top:862px" width="8" height="5"><path d="M0 0H8L4 5Z" fill="#76767a"/></svg>
<svg style="left:1840px;top:856px" width="16" height="16"><path d="M0.5 2.5H13.5V14.5H0.5Z" fill="#eef3fa" stroke="#a09060"/><path d="M1 3H9V4.5H1Z" fill="#5a88c8"/><path d="M12 6C12 10 10 13 5 14" stroke="#e8c040" stroke-width="1.1" fill="none"/><path d="M12 0.5V6M9.5 3H14.5" stroke="#e8c040" stroke-width="1.3"/></svg>
<svg style="left:1864px;top:862px" width="8" height="5"><path d="M0 0H8L4 5Z" fill="#1d1d1d"/></svg>
<div class="a" style="left:1881px;top:857px;width:10px;height:4px;border:1px solid #555;background:#fff"></div>
<div class="a" style="left:1899px;top:857px;width:10px;height:10px;border:1px solid #555;border-top:2px solid #555;background:#fff"></div>
<div class="a" style="left:388px;top:877px;width:1526px;height:1px;background:#2b2b2b"></div>
<div class="a" style="left:390px;top:878px;width:1522px;height:18px;background:#fffbf3"></div>
<div class="a" style="left:390px;top:879px;font-size:12px;color:#000;white-space:nowrap">当前是<span style="font-size:13px"> [HBuilder</span>控制台<span style="font-size:13px">]</span>，点右上角工具条相应按钮可切换控制台</div>
<div class="sb" style="left:1896px;top:896px;width:16px;height:94px"></div>
<svg style="left:1900px;top:902px" width="9" height="6"><path d="M0.5 5L4.5 1L8.5 5" fill="none" stroke="#b0b0b0" stroke-width="1.4"/></svg>
<svg style="left:1900px;top:979px" width="9" height="6"><path d="M0.5 1L4.5 5L8.5 1" fill="none" stroke="#b0b0b0" stroke-width="1.4"/></svg>
<div class="sb" style="left:390px;top:990px;width:1522px;height:16px"></div>
<svg style="left:395px;top:993px" width="6" height="9"><path d="M5 0.5L1 4.5L5 8.5" fill="none" stroke="#b0b0b0" stroke-width="1.4"/></svg>
<svg style="left:1884px;top:993px" width="6" height="9"><path d="M1 0.5L5 4.5L1 8.5" fill="none" stroke="#b0b0b0" stroke-width="1.4"/></svg>


<!-- ============ status bar ============ -->
<div class="a" style="left:8px;top:1017px;font-size:12px;color:#000;white-space:pre">已选择 0 项</div>
<div class="a" style="left:1165px;top:1013px;width:1px;height:23px;background:repeating-linear-gradient(to bottom,#a8a8a8 0 1px,transparent 1px 3px)"></div>
<div class="a" style="left:1459px;top:1013px;width:1px;height:23px;background:repeating-linear-gradient(to bottom,#a8a8a8 0 1px,transparent 1px 3px)"></div>
<div class="a" style="left:1627px;top:1013px;width:1px;height:23px;background:repeating-linear-gradient(to bottom,#a8a8a8 0 1px,transparent 1px 3px)"></div>
<div class="a" style="left:1470px;top:1018px;font-size:13px;color:#000">HTML Editor</div>
<svg style="left:1640px;top:1016px" width="10" height="11"><circle cx="5" cy="3" r="2.8" fill="#2e9a20"/><path d="M0 11C0 7 2 6 5 6C8 6 10 7 10 11Z" fill="#2e9a20"/></svg>
<div class="a" style="left:1657px;top:1015px;font-size:13px;color:#1a5fd0;text-decoration:underline">123026403@qq.com</div>
<div class="a" style="left:1808px;top:1015px;font-size:12px;color:#1a5fd0;text-decoration:underline">赞助我们</div>

<div class="a" style="left:0;top:1040px;width:1920px;height:8px;background:linear-gradient(to right,#0f171d,#11161a 40%,#161818 70%,#0d1418)"></div>
<div class="a" style="left:643px;top:1040px;width:48px;height:8px;background:#3b4044"></div>
<div class="a" style="left:1915px;top:1040px;width:1px;height:8px;background:#60666a"></div>
<div class="a" style="left:1767px;top:1042px;font-size:11px;color:#e8e8e8;line-height:12px">17:04</div>
</body></html>
